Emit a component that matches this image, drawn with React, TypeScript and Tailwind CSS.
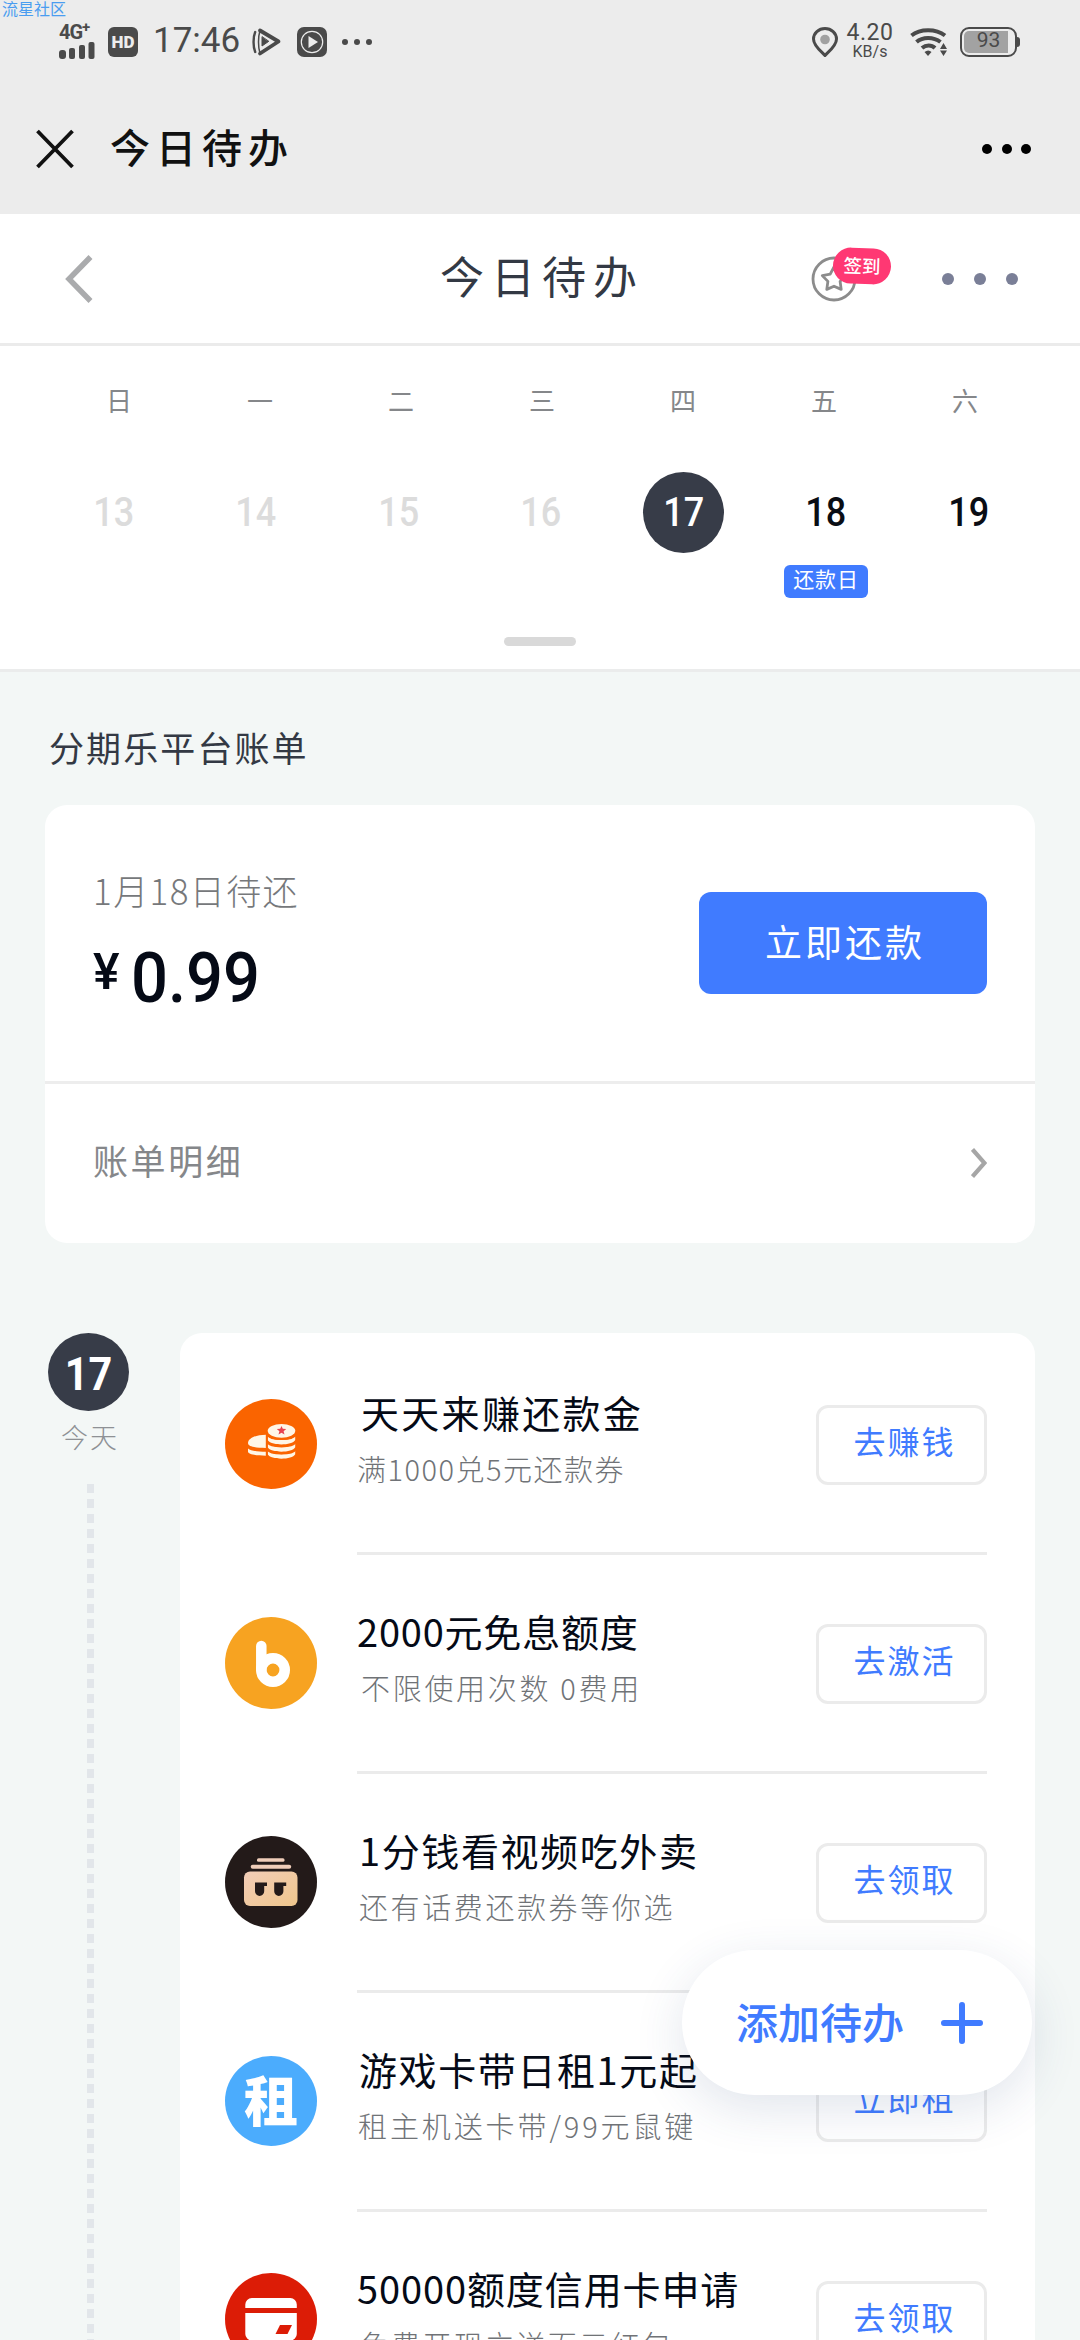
import React from 'react';

interface Day { week: string; date: number; past?: boolean; today?: boolean; tag?: string; }
interface Task { title: string; titleClass: string; desc: string; descClass: string; action: string; icon: React.ReactNode; }

const DAYS: Day[] = [
  { week: '日', date: 13, past: true },
  { week: '一', date: 14, past: true },
  { week: '二', date: 15, past: true },
  { week: '三', date: 16, past: true },
  { week: '四', date: 17, today: true },
  { week: '五', date: 18, tag: '还款日' },
  { week: '六', date: 19 },
];

const CoinsIcon = () => (
  <svg viewBox="0 0 92 92" preserveAspectRatio="none" className="w-[92px] h-[90px]">
    <circle cx="46" cy="46" r="46" fill="#fa6400" />
    <g fill="#fff6e6">
      <path d="M23 45c0-5 8-8.500 18-8.500v13.500c-10 0-18-1-18-5z" />
      <path d="M23 50.500c3 2.500 10 3.500 18 3.500v4c-10 0-18-1.500-18-4z" />
      <ellipse cx="56.500" cy="32.500" rx="13.800" ry="7" />
      <path d="M42.700 38c5 5 22.500 5 27.500 0v4c-3 6-24.500 6-27.500 0z" />
      <path d="M42.700 45.300c5 5 22.500 5 27.500 0v4c-3 6-24.500 6-27.500 0z" />
      <path d="M42.700 52.600c5 5 22.500 5 27.500 0v4c-3 6-24.500 6-27.500 0z" />
    </g>
    {/* orange edges that part the stacked coins */}
    <g fill="none" stroke="#fa6400" strokeWidth="2">
      <path d="M41.800 36v25" />
      <path d="M42 36.500c4 6 25 6 29 0M42 44c4 6 25 6 29 0M42 51.300c4 6 25 6 29 0" />
    </g>
    <path d="M56.500 27.500l1.300 3 3.400.2-2.600 2.200.9 3.300-3-1.800-3 1.800.9-3.300-2.600-2.200 3.400-.2z" fill="#e8434f" />
  </svg>
);

const BeanIcon = () => (
  <svg viewBox="0 0 92 92" className="w-[92px] h-[92px]">
    <circle cx="46" cy="46" r="46" fill="#f7a321" />
    <path d="M36.300 29v23" stroke="#fff" strokeWidth="10.500" strokeLinecap="round" />
    <circle cx="48" cy="53" r="11.700" fill="none" stroke="#fff" strokeWidth="10.600" />
  </svg>
);

const VideoIcon = () => (
  <svg viewBox="0 0 92 92" className="w-[92px] h-[92px]">
    <defs>
      <linearGradient id="face" x1="0" y1="0" x2="1" y2="1">
        <stop offset="0" stopColor="#f2cdb8" />
        <stop offset="1" stopColor="#efc68c" />
      </linearGradient>
    </defs>
    <circle cx="46" cy="46" r="46" fill="#231a19" />
    <rect x="32" y="22.300" width="27.500" height="3.400" rx="1.500" fill="#efcdb9" />
    <rect x="25.700" y="28.700" width="40.500" height="4" rx="2" fill="#efcdb9" />
    <rect x="19" y="35.500" width="53.500" height="34.500" rx="6" fill="url(#face)" />
    <g fill="#231a19">
      <path d="M30 46.500h12v3.500h-2.800v5.300a4.600 4.600 0 0 1-9.200 0z" />
      <path d="M49.200 46.500h12v3.500h-2.800v5.300a4.600 4.600 0 0 1-9.200 0z" />
    </g>
  </svg>
);

const RentIcon = () => (
  <div className="w-[92px] h-[90px] rounded-[50%] bg-[#4bacfd] text-white text-[54px] leading-none font-black flex items-center justify-center pb-1">租</div>
);

const CardIcon = () => (
  <svg viewBox="0 0 92 92" className="w-[92px] h-[92px] -mt-[2px]">
    <circle cx="46" cy="46" r="46" fill="#dc1c06" />
    <path d="M20.300 35v-3.500a6.500 6.500 0 0 1 6.500-6.500h38.500a6.500 6.500 0 0 1 6.500 6.500v3.500z" fill="#fff" />
    <path d="M20.300 40h51.500v21a6.500 6.500 0 0 1-6.500 6.500h-38.500a6.500 6.500 0 0 1-6.500-6.500z" fill="#fff" />
    <path d="M55 52h12l-4.500 9h-12z" fill="#dc1c06" />
  </svg>
);

const TASKS: Task[] = [
  { title: '天天来赚还款金', titleClass: 'tracking-[2.3px] pl-1', desc: '满1000兑5元还款券', descClass: 'tracking-[1.5px]', action: '去赚钱', icon: <CoinsIcon /> },
  { title: '2000元免息额度', titleClass: 'tracking-[0.8px]', desc: '不限使用次数 0费用', descClass: 'tracking-[2.7px] pl-1', action: '去激活', icon: <BeanIcon /> },
  { title: '1分钱看视频吃外卖', titleClass: 'tracking-[1.6px] pl-[2px]', desc: '还有话费还款券等你选', descClass: 'tracking-[2.6px] pl-[2px]', action: '去领取', icon: <VideoIcon /> },
  { title: '游戏卡带日租1元起', titleClass: 'tracking-[1.6px] pl-[2px]', desc: '租主机送卡带/99元鼠键', descClass: 'tracking-[2.9px] pl-[1px]', action: '立即租', icon: <RentIcon /> },
  { title: '50000额度信用卡申请', titleClass: 'tracking-[0.9px]', desc: '免费开现立送百元红包', descClass: 'tracking-[2.3px] pl-[3px]', action: '去领取', icon: <CardIcon /> },
];

const StatusBar = () => (
  <div className="relative h-[84px] flex items-center justify-between pl-[59px] pr-[60px] text-[#4a4a4a]">
    <span className="absolute left-[2px] top-0 text-[16px] leading-[16px] text-[#4a9df0]">流星社区</span>
    <div className="flex items-center">
      <div className="w-[37px] flex flex-col">
        <span className="font-['Roboto'] font-bold text-[20px] leading-[15px] tracking-[-1px]">4G<sup className="text-[15px] leading-none">+</sup></span>
        <svg viewBox="0 0 36 17" className="w-9 h-[17px]" fill="currentColor">
          <rect x="0" y="8" width="7" height="9" rx="3" />
          <rect x="10" y="6" width="6" height="11" rx="2" />
          <rect x="20" y="3" width="6" height="14" rx="2" />
          <rect x="29.500" y="0" width="6" height="17" rx="2" />
        </svg>
      </div>
      <div className="ml-3 w-[30px] h-[30px] rounded-[6px] bg-[#4a4a4a] text-[#ececec] font-['Roboto'] font-black text-[17px] leading-none flex items-center justify-center">HD</div>
      <span className="ml-[15px] w-[90px] -mt-1 font-['Roboto'] text-[35px] leading-none whitespace-nowrap">17:46</span>
      <svg viewBox="0 0 30 30" className="ml-[9px] w-[30px] h-[30px]" fill="none" stroke="currentColor" strokeLinejoin="round" strokeLinecap="round">
        <path d="M8 3.500L26.500 14.500 8 26.500" strokeWidth="3.800" />
        <path d="M8 3.500C6 10 6 20 8 26.500" strokeWidth="1.500" />
        <path d="M3.200 5c-2.200 5-2.200 15 0 20" strokeWidth="2.400" />
        <path d="M10 10v9l6.500-4.500z" fill="currentColor" strokeWidth="1" />
      </svg>
      <svg viewBox="0 0 30 30" className="ml-[15px] w-[30px] h-[30px]">
        <rect width="30" height="30" rx="7" fill="#4a4a4a" />
        <circle cx="15" cy="15" r="10.700" fill="none" stroke="#ececec" strokeWidth="1.200" />
        <path d="M11.500 9v12l9.500-6z" fill="#ececec" />
      </svg>
      <div className="ml-[15px] flex gap-[6px]">
        <i className="w-[6px] h-[6px] rounded-full bg-[#4a4a4a]" />
        <i className="w-[6px] h-[6px] rounded-full bg-[#4a4a4a]" />
        <i className="w-[6px] h-[6px] rounded-full bg-[#4a4a4a]" />
      </div>
    </div>
    <div className="flex items-center">
      <svg viewBox="0 0 26 30" className="w-[26px] h-[30px]">
        <path d="M13 28.500C10 25 1.500 19 1.500 12a11.500 10.500 0 0 1 23 0c0 7-8.500 13-11.500 16.500z" fill="none" stroke="#4a4a4a" strokeWidth="3" />
        <circle cx="13" cy="12.500" r="4.800" fill="#a0a0a0" />
      </svg>
      <div className="ml-[7px] w-[50px] -mt-[3px] flex flex-col items-center font-['Roboto']">
        <span className="text-[23px] leading-[23px] tracking-[0.5px]">4.20</span>
        <span className="text-[16px] leading-[16px]">KB/s</span>
      </div>
      <svg viewBox="0 0 38 30" className="ml-[15px] w-[38px] h-[30px]" fill="none" stroke="#4a4a4a" strokeWidth="4">
        <path d="M1.500 8.500C10 1.500 26 1.500 35 8.500" />
        <path d="M6.500 15c6-5.500 17-5.500 24 0" />
        <path d="M12 21c4-3.500 9.500-3.500 13 0" />
        <path d="M14.500 25c2.500-2 5-2 7 0l-3.500 4z" fill="#4a4a4a" stroke="none" />
        <path d="M33.500 16l3.500 6h-7zM33.500 29l3.500-5.500h-7z" fill="#4a4a4a" stroke="none" />
      </svg>
      <div className="ml-3 relative w-[57px] h-[30px] rounded-[9px] border-[2.5px] border-[#4a4a4a] p-[2px]">
        <div className="w-[44px] h-full rounded-l-[5px] bg-[#a2a2a2]" />
        <span className="absolute inset-0 -top-[3px] flex items-center justify-center font-['Roboto'] text-[21px] leading-none">93</span>
      </div>
      <i className="w-[3px] h-[10px] bg-[#4a4a4a] rounded-r" />
    </div>
  </div>
);

const TitleBar = () => (
  <div className="h-[130px] flex items-center px-9 text-[#111]">
    <svg viewBox="0 0 38 40" className="w-[38px] h-10" stroke="#111" strokeWidth="3.800" fill="none">
      <path d="M1.500 2l35 36M36.500 2l-35 36" />
    </svg>
    <span className="ml-[36px] -mt-[6px] text-[40px] leading-none tracking-[6px] font-medium">今日待办</span>
    <div className="ml-auto mr-[13px] flex gap-[9.500px]">
      <i className="w-[10px] h-[10px] rounded-full bg-black" />
      <i className="w-[10px] h-[10px] rounded-full bg-black" />
      <i className="w-[10px] h-[10px] rounded-full bg-black" />
    </div>
  </div>
);

const PageHeader = () => (
  <header className="h-[132px] border-b-[3px] border-[#ebebeb] bg-white grid grid-cols-3 items-center">
    <svg viewBox="0 0 28 48" className="ml-[65px] w-7 h-12" fill="none" stroke="#aaabad" strokeWidth="5.500">
      <path d="M25.500 2L4 24l21.500 22" />
    </svg>
    <h1 className="-mt-[7px] text-center text-[44px] leading-none tracking-[7px] text-[#333944] pl-1">今日待办</h1>
    <div className="flex items-center pl-[91px]">
      <div className="relative w-[46px] h-[46px]">
        <svg viewBox="0 0 46 46" className="w-[46px] h-[46px]" fill="none" stroke="#8c8c8c" strokeWidth="2.800" strokeLinejoin="round">
          <circle cx="23" cy="23" r="21" />
          <path d="M23 11l3.800 7.200 7.900 1.400-5.600 5.800 1.100 8-7.200-3.200-7.200 3.200 1.100-8-5.600-5.800 7.900-1.400z" />
        </svg>
        <span className="absolute left-[22px] -top-[8px] w-[58px] h-[36px] rounded-[18px] rotate-2 bg-[#ff3873] text-white text-[18.5px] leading-none font-medium flex items-center justify-center pb-[2px]">签到</span>
      </div>
      <div className="ml-[85px] flex gap-[20px]">
        <i className="w-[12px] h-[12px] rounded-full bg-[#7a7f97]" />
        <i className="w-[12px] h-[12px] rounded-full bg-[#7a7f97]" />
        <i className="w-[12px] h-[12px] rounded-full bg-[#7a7f97]" />
      </div>
    </div>
  </header>
);

const WeekStrip = () => (
  <section className="h-[326px] bg-white border-b-[3px] border-[#ebecec] flex flex-col items-center">
    <div className="mt-[40px] w-[987px] ml-[4px] grid grid-cols-7 text-center text-[26px] leading-[28px] text-[#85878a]">
      {DAYS.map(d => <span key={d.week}>{d.week}</span>)}
    </div>
    <div className="mt-[58px] w-[998px] ml-[2px] h-[126px] grid grid-cols-7 justify-items-center">
      {DAYS.map(d => (
        <div key={d.date} className="flex flex-col items-center">
          <span className={`w-[81px] h-[81px] rounded-full flex items-center justify-center font-['Roboto'] font-medium text-[40px] leading-none ${d.today ? 'bg-[#373c48] text-white' : d.past ? 'text-[#dcdcdc]' : 'text-[#0a0d14]'}`}><span className="scale-x-90">{d.date}</span></span>
          {d.tag && <span className="mt-[12px] w-[84px] h-[33px] rounded-[6px] bg-[#407bff] text-white text-[21px] leading-[27px] tracking-[1px] text-center whitespace-nowrap">{d.tag}</span>}
        </div>
      ))}
    </div>
    <div className="mt-[39px] w-[72px] h-[9px] rounded-full bg-[#d9d9d9]" />
  </section>
);

const BillCard = () => (
  <section className="mx-[45px] bg-white rounded-[22px] h-[438px]">
    <div className="h-[279px] border-b-[3px] border-[#ededed] flex justify-between px-12">
      <div className="pt-[65px]">
        <p className="text-[35px] leading-[40px] tracking-[1.4px] font-light text-[#76787b]">1月18日待还</p>
        <p className="mt-[33px] flex items-start font-['Roboto'] font-medium text-[#050a16]">
          <span className="text-[50px] leading-[64px] -mt-[3px]">¥</span>
          <span className="ml-[11px] origin-left scale-x-[0.93] text-[70px] leading-[70px]">0.99</span>
        </p>
      </div>
      <button className="mt-[87px] w-[288px] h-[102px] rounded-[12px] bg-[#407bff] text-white text-[37px] leading-none tracking-[3px] pl-1 pb-1">立即还款</button>
    </div>
    <div className="h-[159px] flex items-center justify-between px-12">
      <span className="-mt-[9px] text-[35px] leading-none tracking-[2.6px] text-[#85878a]">账单明细</span>
      <svg viewBox="0 0 16 30" className="w-4 h-[30px] -mt-[2px]" fill="none" stroke="#a6a6a6" strokeWidth="4.200">
        <path d="M1.500 1.500L13.500 15l-12 13.500" />
      </svg>
    </div>
  </section>
);

const TaskRow: React.FC<{ task: Task }> = ({ task }) => (
  <div className="h-[219px] flex pl-[45px] pr-12">
    <div className="w-[92px] h-[221px] flex items-center shrink-0">{task.icon}</div>
    <div className="ml-10 flex-1 h-[222px] border-b-[3px] border-[#ebebeb] flex justify-between">
      <div className="pt-[59px]">
        <h3 className={`text-[38px] leading-[40px] text-[#050a16] whitespace-nowrap ${task.titleClass}`}>{task.title}</h3>
        <p className={`mt-[18px] text-[29px] leading-[36px] font-light text-[#707377] whitespace-nowrap ${task.descClass}`}>{task.desc}</p>
      </div>
      <button className="mt-[72px] w-[171px] h-[80px] rounded-[12px] border-[3px] border-[#ebebeb] text-[#407bff] text-[32px] leading-none tracking-[2px] pl-[6px] pb-[10px] shrink-0">{task.action}</button>
    </div>
  </div>
);

const Timeline = () => (
  <section className="mt-[90px] flex h-[1007px] overflow-hidden px-[45px]">
    <div className="w-[90px] flex flex-col items-center">
      <div className="-ml-1 w-[81px] h-[78px] rounded-[50%] bg-[#373c48] text-white font-['Roboto'] font-bold text-[46px] leading-none flex items-center justify-center pt-1"><span className="scale-x-90">17</span></div>
      <span className="mt-[10px] text-[27px] leading-[32px] tracking-[2px] font-light text-[#8e9195]">今天</span>
      <div className="mt-[31px] w-[7px] flex-1 bg-[repeating-linear-gradient(to_bottom,#e2e6ea_0px,#e2e6ea_9px,transparent_9px,transparent_15px)]" />
    </div>
    <div className="ml-[45px] flex-1 bg-white rounded-t-[22px]">
      {TASKS.map(t => <TaskRow key={t.title} task={t} />)}
    </div>
  </section>
);

export default function App() {
  return (
    <div className="relative w-[1080px] h-[2340px] overflow-hidden bg-[#f3f7f6] font-['Noto_Sans_CJK_SC',sans-serif]">
      <div className="h-[214px] bg-[#ececec]">
        <StatusBar />
        <TitleBar />
      </div>
      <PageHeader />
      <WeekStrip />
      <h2 className="mt-[54px] mb-[37px] ml-[49px] text-[35px] leading-[42px] tracking-[2.1px] text-[#333944]">分期乐平台账单</h2>
      <BillCard />
      <Timeline />
      {/* floating add button */}
      <button className="absolute left-[682px] top-[1950px] w-[350px] h-[145px] rounded-full bg-white shadow-[0_14px_50px_rgba(40,70,120,0.14)] flex items-center pl-[54px] text-[#407bff]">
        <span className="text-[42px] leading-none font-medium pb-1">添加待办</span>
        <svg viewBox="0 0 44 44" className="ml-[36px] w-11 h-11" stroke="#407bff" strokeWidth="6" strokeLinecap="round">
          <path d="M22 4v36M4 22h36" />
        </svg>
      </button>
    </div>
  );
}
